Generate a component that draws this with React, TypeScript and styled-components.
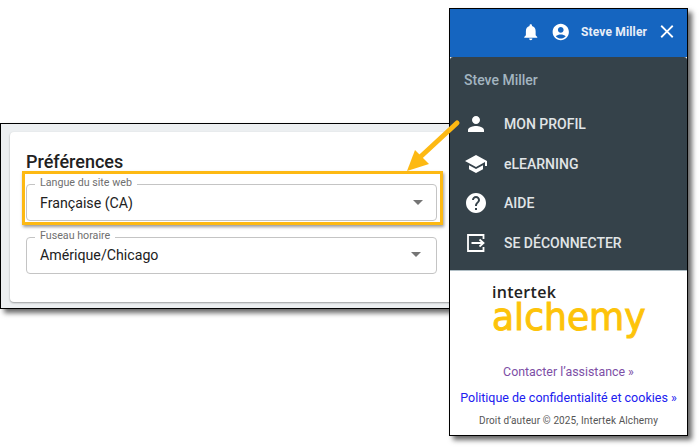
import React from 'react';
import styled, { createGlobalStyle } from 'styled-components';

const GlobalStyle = createGlobalStyle`
  html, body {
    margin: 0;
    padding: 0;
    background: #fff;
    font-family: Roboto, "Liberation Sans", sans-serif;
  }
`

const Desktop = styled.div`
  position: relative;
  width: 700px;
  height: 447px;
  overflow: hidden;
  background: #fff;
`

const PrefWindow = styled.section`
  position: absolute;
  left: 0;
  top: 123px;
  width: 450px;
  height: 186px;
  box-sizing: border-box;
  border: 1px solid #000;
  background: #eceff1;
  padding: 8px 0 0 9px;
  box-shadow: 4px 4px 5px rgba(0, 0, 0, 0.6);
`

const Card = styled.div`
  width: 443px;
  height: 170px;
  box-sizing: border-box;
  background: #fff;
  border-radius: 4px;
  padding: 21px 16px 0;
  box-shadow: 0 1px 2px rgba(0, 0, 0, 0.35);
`

const Title = styled.h2`
  margin: 0 0 13px;
  font-size: 18px;
  line-height: 18px;
  font-weight: 500;
  color: #212121;
`

const Field = styled.div<{ $caretInset: number; $textLift: number }>`
  position: relative;
  width: 411px;
  height: 37px;
  box-sizing: border-box;
  border: 1px solid #c4c4c4;
  border-radius: 4px;
  display: flex;
  align-items: center;
  justify-content: space-between;
  padding: 0 ${(p) => p.$caretInset}px ${(p) => p.$textLift}px 13px;
  margin-bottom: 16px;
`

const FieldLabel = styled.span`
  position: absolute;
  left: 8px;
  top: -8px;
  padding: 0 5px;
  background: #fff;
  font-size: 10.7px;
  line-height: 12px;
  color: #6f6f6f;
`

const FieldValue = styled.span`
  font-size: 14.2px;
  color: #212121;
`

const Caret = styled.i`
  width: 0;
  height: 0;
  border-left: 5px solid transparent;
  border-right: 5px solid transparent;
  border-top: 5px solid #757575;
`

const Callout = styled.div`
  position: absolute;
  left: 22px;
  top: 171px;
  width: 421px;
  height: 54px;
  box-sizing: border-box;
  border: 3px solid #fdb913;
  box-shadow: 1px 2px 3px rgba(0, 0, 0, 0.4);
`

const MenuWindow = styled.aside`
  position: absolute;
  left: 449px;
  top: 8px;
  width: 239px;
  height: 428px;
  box-sizing: border-box;
  border: 1px solid #000;
  background: #fff;
  display: flex;
  flex-direction: column;
  box-shadow: 4px 4px 5px rgba(0, 0, 0, 0.6);
`

const TopBar = styled.header`
  height: 48px;
  flex-shrink: 0;
  box-sizing: border-box;
  background: #1565c0;
  display: flex;
  align-items: center;
  gap: 10px;
  color: #fff;
  padding: 0 9px 3px 71px;
`

const TopName = styled.span`
  font-size: 12px;
  font-weight: 700;
  letter-spacing: 0.15px;
  margin: 0 -1px 0 1px;
  white-space: nowrap;
  color: #e8eef7;
`

const DarkPanel = styled.div`
  height: 214px;
  flex-shrink: 0;
  box-sizing: border-box;
  background: #35424a;
  border-radius: 3px 3px 0 0;
  border-bottom: 1px solid #b0bec5;
  padding: 15px 0 0 14px;
`

const PanelName = styled.div`
  font-size: 14px;
  line-height: 16px;
  font-weight: 500;
  color: #a3b5c0;
  margin-bottom: 24px;
`

const MenuList = styled.nav`
  display: flex;
  flex-direction: column;
  gap: 15.6px;
`

const MenuItem = styled.a`
  display: flex;
  align-items: center;
  height: 24px;
  color: #e1e5e7;
  font-size: 14px;
  font-weight: 500;
`

const MenuIcon = styled.span`
  width: 24px;
  height: 24px;
  margin-right: 16px;
  display: flex;
  align-items: center;
  justify-content: center;
  color: #fff;
`

const Logo = styled.div`
  padding: 14px 0 0 42px;
  height: 84px;
  flex-shrink: 0;
  box-sizing: border-box;
  display: flex;
  flex-direction: column;
`

const LogoTop = styled.span`
  font-family: "Open Sans", sans-serif;
  font-size: 16px;
  line-height: 15px;
  font-weight: 600;
  letter-spacing: 0.3px;
  color: #222;
`

const LogoWord = styled.span`
  font-family: "DejaVu Sans", sans-serif;
  font-size: 38px;
  line-height: 38px;
  font-weight: 400;
  color: #fdc30a;
  -webkit-text-stroke: 1px #fdc30a;
  transform: scaleX(0.95);
  transform-origin: left center;
  white-space: nowrap;
  margin-top: -2px;
`

const Footer = styled.div`
  display: flex;
  flex-direction: column;
  align-items: center;
  padding-top: 10px;
`

const FooterLink = styled.a<{ $color: string; $size: number }>`
  font-size: ${(p) => p.$size}px;
  line-height: 14px;
  margin-bottom: 12px;
  color: ${(p) => p.$color};
  white-space: nowrap;
`

const Copyright = styled.small`
  font-size: 10px;
  line-height: 12px;
  color: #555;
  letter-spacing: 0.12px;
  margin-top: -2px;
`

const ArrowSvg = styled.svg`
  position: absolute;
  left: 395px;
  top: 110px;
`

function Icon({ d, size = 24 }: { d: string; size?: number }) {
  return (
    <svg width={size} height={size} viewBox="0 0 24 24" fill="currentColor">
      <path d={d} />
    </svg>
  );
}

const BELL = 'M12 22c1.1 0 2-.9 2-2h-4c0 1.1.89 2 2 2zm6-6v-5c0-3.07-1.64-5.64-4.5-6.32V4c0-.83-.67-1.5-1.5-1.5s-1.5.67-1.5 1.5v.68C7.63 5.36 6 7.92 6 11v5l-2 2v1h16v-1l-2-2z';
const AVATAR = 'M12 2C6.48 2 2 6.48 2 12s4.48 10 10 10 10-4.48 10-10S17.52 2 12 2zm0 4c1.93 0 3.5 1.57 3.5 3.5S13.93 13 12 13s-3.5-1.57-3.5-3.5S10.07 6 12 6zm0 14c-2.03 0-4.43-.82-6.14-2.88C7.55 15.8 9.68 15 12 15s4.45.8 6.14 2.12C16.43 19.18 14.03 20 12 20z';
const CLOSE = 'M19 6.41 17.59 5 12 10.59 6.41 5 5 6.41 10.59 12 5 17.59 6.41 19 12 13.41 17.59 19 19 17.59 13.41 12z';
const PERSON = 'M12 12c2.21 0 4-1.79 4-4s-1.79-4-4-4-4 1.79-4 4 1.79 4 4 4zm0 2c-2.67 0-8 1.34-8 4v2h16v-2c0-2.66-5.33-4-8-4z';
const SCHOOL = 'M5 13.18v4L12 21l7-3.82v-4L12 17l-7-3.82zM12 3 1 9l11 6 9-4.91V14h2V9L12 3z';
const HELP = 'M12 2C6.48 2 2 6.48 2 12s4.48 10 10 10 10-4.48 10-10S17.52 2 12 2zm1 17h-2v-2h2v2zm2.07-7.75-.9.92C13.45 12.9 13 13.5 13 15h-2v-.5c0-1.1.45-2.1 1.17-2.83l1.24-1.26c.37-.36.59-.86.59-1.41 0-1.1-.9-2-2-2s-2 .9-2 2H8c0-2.21 1.79-4 4-4s4 1.79 4 4c0 .88-.36 1.68-.93 2.25z';

function LogoutIcon() {
  return (
    <svg width="20" height="20" viewBox="0 0 20 20" fill="none" stroke="currentColor" strokeWidth="1.8">
      <path d="M17.5 6V2H2v16h15.5v-4" />
      <path d="M5.5 10h12M13.5 6.5l4 3.5-4 3.5" />
    </svg>
  );
}

export default function App() {
  return (
    <Desktop>
      <GlobalStyle />
      <PrefWindow>
        <Card>
          <Title>Préférences</Title>
          <Field $caretInset={13} $textLift={0}>
            <FieldLabel>Langue du site web</FieldLabel>
            <FieldValue>Française (CA)</FieldValue>
            <Caret />
          </Field>
          <Field $caretInset={15} $textLift={2}>
            <FieldLabel>Fuseau horaire</FieldLabel>
            <FieldValue>Amérique/Chicago</FieldValue>
            <Caret />
          </Field>
        </Card>
      </PrefWindow>
      <Callout />
      <MenuWindow>
        <TopBar>
          <Icon d={BELL} />
          <Icon d={AVATAR} />
          <TopName>Steve Miller</TopName>
          <Icon d={CLOSE} size={27} />
        </TopBar>
        <DarkPanel>
          <PanelName>Steve Miller</PanelName>
          <MenuList>
            <MenuItem><MenuIcon><Icon d={PERSON} /></MenuIcon>MON PROFIL</MenuItem>
            <MenuItem><MenuIcon><Icon d={SCHOOL} /></MenuIcon>eLEARNING</MenuItem>
            <MenuItem><MenuIcon><Icon d={HELP} /></MenuIcon>AIDE</MenuItem>
            <MenuItem><MenuIcon><LogoutIcon /></MenuIcon>SE DÉCONNECTER</MenuItem>
          </MenuList>
        </DarkPanel>
        <Logo>
          <LogoTop>intertek</LogoTop>
          <LogoWord>alchemy</LogoWord>
        </Logo>
        <Footer>
          <FooterLink $color="#7d4fa6" $size={12.4}>Contacter l’assistance »</FooterLink>
          <FooterLink $color="#2020f0" $size={12.5}>Politique de confidentialité et cookies »</FooterLink>
          <Copyright>Droit d’auteur © 2025, Intertek Alchemy</Copyright>
        </Footer>
      </MenuWindow>
      <ArrowSvg width="70" height="70" viewBox="0 0 70 70">
        <path d="M62 13 L22 50" stroke="#fdb913" strokeWidth="5" strokeLinecap="round" fill="none" />
        <path d="M12 61 L20 40 L34 54 Z" fill="#fdb913" />
      </ArrowSvg>
    </Desktop>
  );
}
